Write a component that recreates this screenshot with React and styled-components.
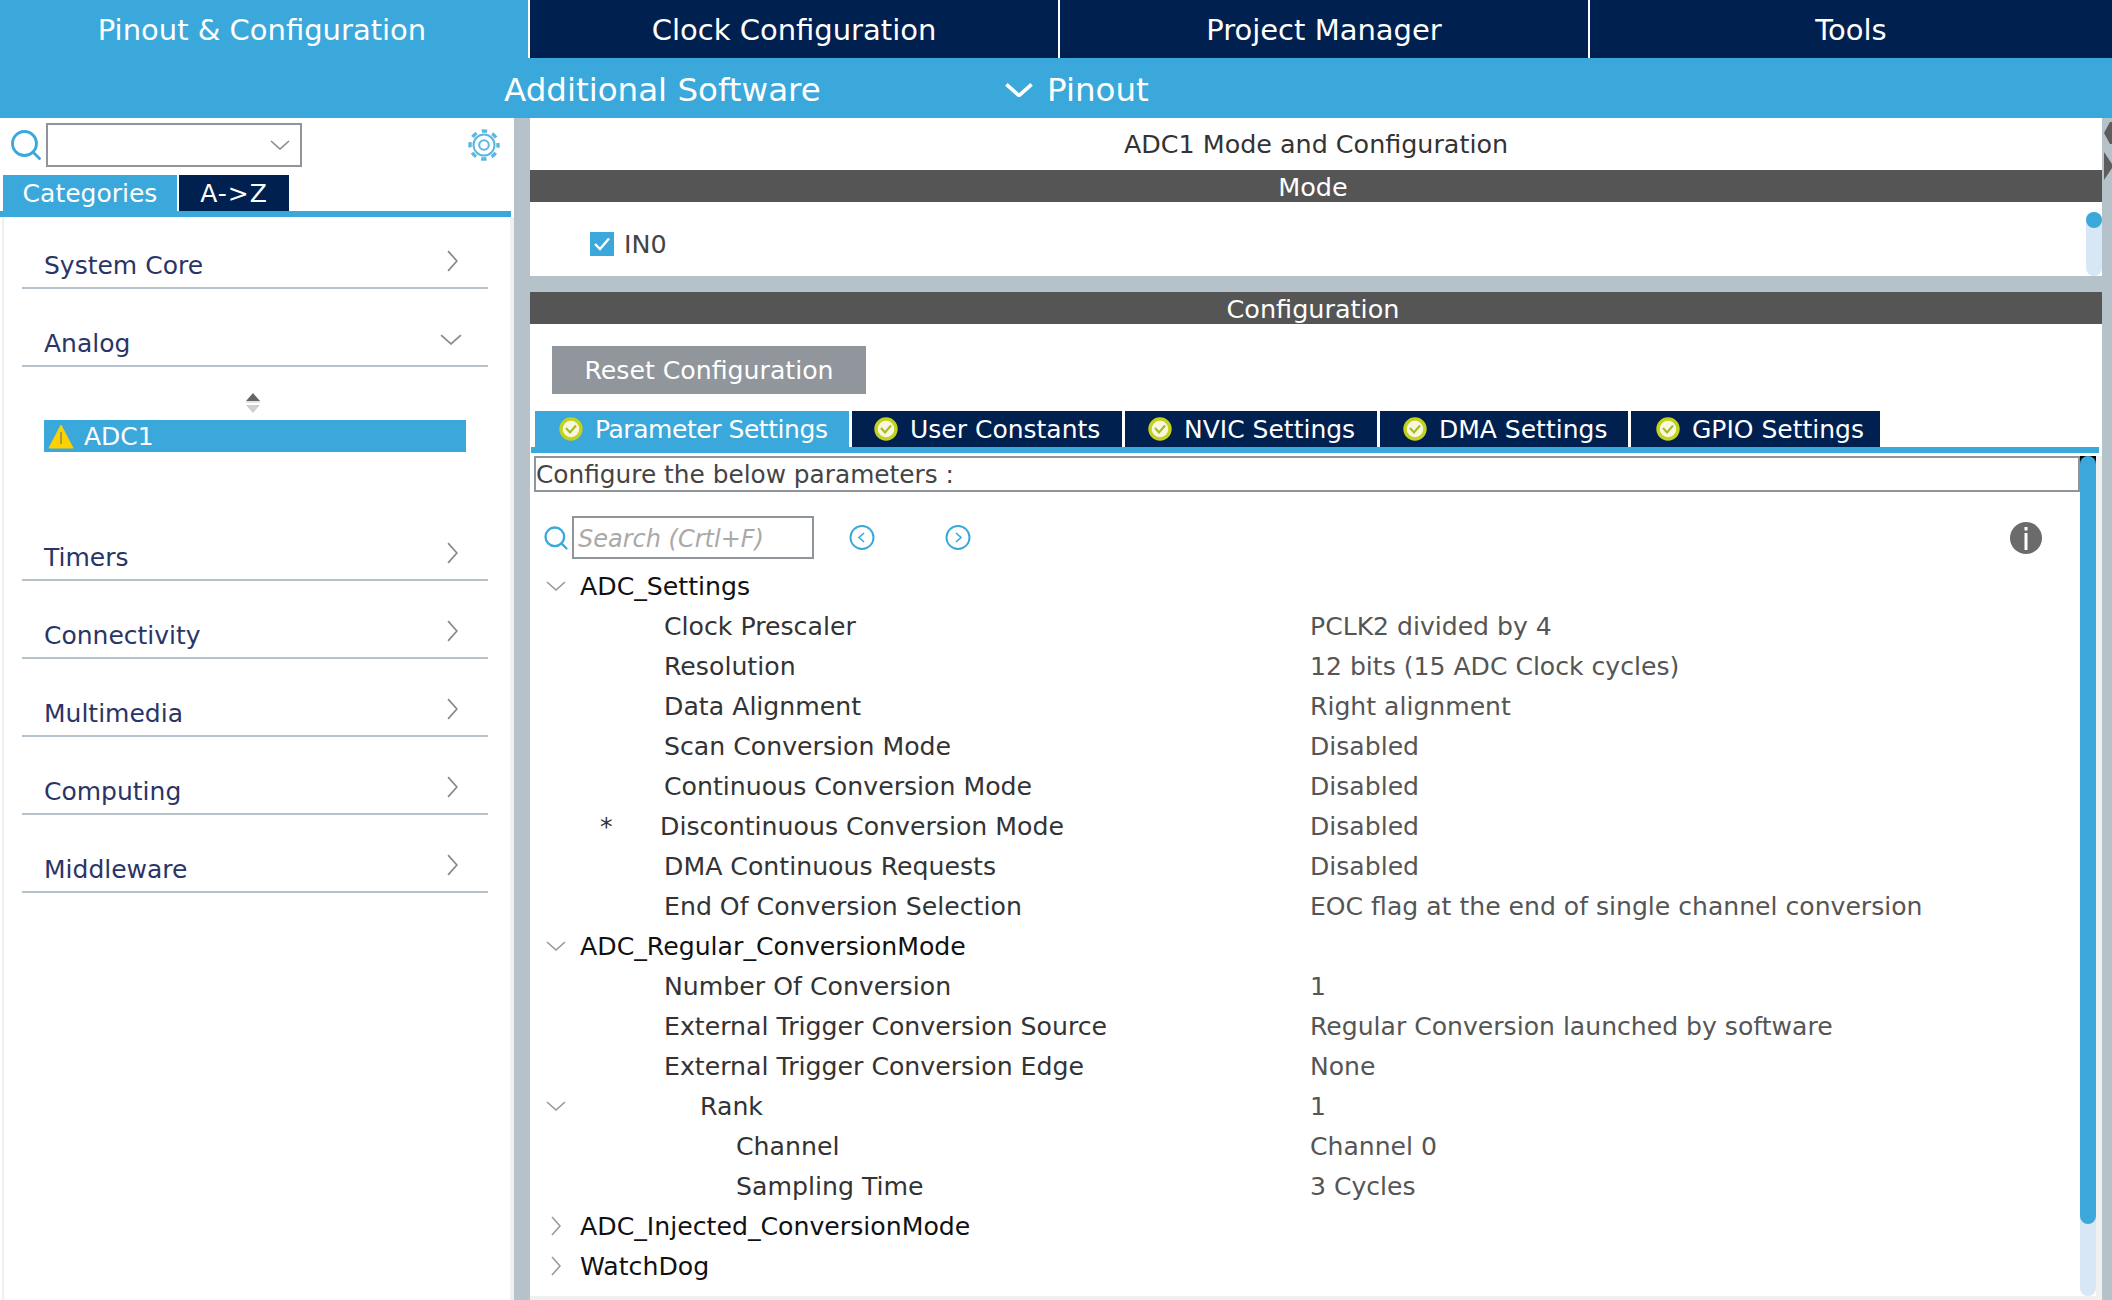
import React from "react";
import styled, { createGlobalStyle } from "styled-components";
import { Search } from "lucide-react";

const BLUE = "#3ba8dc";
const NAVY = "#00204f";
const LINE = "#b6c2ca";

const GlobalStyle = createGlobalStyle`
  html, body {
    margin: 0;
    padding: 0;
    background: #fff;
    overflow: hidden;
  }
  * { box-sizing: border-box; }
  body {
    font-family: "DejaVu Sans", "Open Sans", sans-serif;
  }
`;

const Page = styled.div`
  width: 2112px;
  height: 1300px;
  display: flex;
  flex-direction: column;
`;

const TopTabs = styled.div`
  display: grid;
  grid-template-columns: 528px 530px 530px 524px;
  height: 58px;
  background: ${BLUE};
`;

const TopTab = styled.div`
  display: flex;
  align-items: center;
  justify-content: center;
  padding: 1px ${(p) => (p.$active ? "4px" : "0")} 0 0;
  font-size: 29px;
  color: #fff;
  background: ${(p) => (p.$active ? BLUE : NAVY)};
  border-left: ${(p) => (p.$active ? "0" : "2px solid #fff")};
`;

const SubBar = styled.div`
  display: flex;
  align-items: center;
  height: 60px;
  padding: 3px 0 0 504px;
  background: ${BLUE};
  color: #fff;
  font-size: 32.5px;
`;

const SubItem = styled.div`
  width: 501px;
`;

const PinoutItem = styled.div`
  display: flex;
  align-items: center;
  gap: 14px;
`;

const Body = styled.div`
  flex: 1;
  display: flex;
  min-height: 0;
`;

const LeftPanel = styled.div`
  width: 514px;
  display: flex;
  flex-direction: column;
  background: #fff;
`;

const FinderRow = styled.div`
  display: flex;
  align-items: center;
  height: 57px;
  padding: 0 14px 4px 8px;
  color: ${BLUE};
`;

const Combo = styled.div`
  display: flex;
  align-items: center;
  justify-content: flex-end;
  width: 256px;
  height: 44px;
  margin-left: 2px;
  margin-right: auto;
  padding-right: 10px;
  border: 2px solid #8f959b;
`;

const SideTabs = styled.div`
  display: flex;
  gap: 2px;
  height: 36px;
  padding-left: 3px;
`;

const SideTab = styled.div`
  display: flex;
  align-items: center;
  justify-content: center;
  width: ${(p) => p.$width}px;
  font-size: 25px;
  letter-spacing: ${(p) => (p.$active ? "0" : "1px")};
  color: #fff;
  background: ${(p) => (p.$active ? BLUE : NAVY)};
`;

const SideRule = styled.div`
  width: 511px;
  height: 6px;
  background: ${BLUE};
`;

const CategoryList = styled.div`
  flex: 1;
  display: flex;
  flex-direction: column;
  gap: 34px;
  width: 508px;
  margin-left: 2px;
  padding: 28px 22px 0 18px;
  border-left: 2px solid #f0f0f0;
  background: #fff;
  box-shadow: 6px 0 0 #f0f0f0;
`;

const CategoryRow = styled.div`
  display: flex;
  align-items: center;
  justify-content: space-between;
  height: 44px;
  padding: 0 ${(p) => (p.$open ? "26px" : "30px")} 2px 22px;
  border-bottom: 2px solid ${LINE};
  font-size: 25px;
  color: #2a3567;
`;

const CategoryIcon = styled.span`
  display: flex;
  margin-top: -8px;
`;

const AnalogItems = styled.div`
  display: flex;
  flex-direction: column;
  align-items: center;
  height: 111px;
  margin-top: -9px;
`;

const SortGlyph = styled.svg`
  width: 18px;
  height: 22px;
  margin-left: -4px;
`;

const SelectedItem = styled.div`
  display: flex;
  align-items: center;
  gap: 10px;
  align-self: stretch;
  height: 32px;
  margin: 6px 0 0 22px;
  width: 422px;
  padding-left: 4px;
  background: ${BLUE};
  color: #fff;
  font-size: 25px;
`;

const Splitter = styled.div`
  width: ${(p) => p.$width}px;
  background: ${LINE};
  flex-shrink: 0;
`;

const EdgeStrip = styled(Splitter)`
  position: relative;
  overflow: hidden;
`;

const EdgeArrows = styled.svg`
  position: absolute;
  top: 0;
  left: 0;
  width: 10px;
  height: 70px;
`;

const RightPanel = styled.div`
  flex: 1;
  display: flex;
  flex-direction: column;
  min-width: 0;
  background: #fff;
`;

const PanelTitle = styled.div`
  display: flex;
  align-items: center;
  justify-content: center;
  height: 52px;
  font-size: 25.4px;
  color: #333;
`;

const DarkBar = styled.div`
  display: flex;
  align-items: center;
  justify-content: center;
  height: 32px;
  padding: 2px 6px 0 0;
  background: #545554;
  color: #fff;
  font-size: 25.5px;
`;

const ModePanel = styled.div`
  position: relative;
  display: flex;
  align-items: center;
  gap: 10px;
  height: 74px;
  padding: 10px 0 0 60px;
  font-size: 25.4px;
  color: #444;
`;

const ModeScroll = styled.div`
  position: absolute;
  right: 0;
  top: 10px;
  bottom: 0;
  width: 16px;
  border-radius: 8px;
  background: #d7e7f5;

  &::before {
    content: "";
    display: block;
    width: 16px;
    height: 16px;
    border-radius: 50%;
    background: ${BLUE};
  }
`;

const CheckBox = styled.span`
  display: flex;
  align-items: center;
  justify-content: center;
  width: 24px;
  height: 24px;
  background: ${BLUE};
`;

const PanelGap = styled.div`
  height: 16px;
  background: ${LINE};
`;

const ConfigBody = styled.div`
  flex: 1;
  display: flex;
  flex-direction: column;
  min-height: 0;
`;

const ResetButton = styled.div`
  display: flex;
  align-items: center;
  justify-content: center;
  width: 314px;
  height: 48px;
  margin: 22px 0 0 22px;
  background: #90969c;
  color: #fff;
  font-size: 25.2px;
`;

const ConfigTabs = styled.div`
  display: flex;
  gap: 3px;
  height: 36px;
  margin: 17px 0 0 5px;
`;

const ConfigTab = styled.div`
  display: flex;
  align-items: center;
  gap: 12px;
  width: ${(p) => p.$width}px;
  padding-left: ${(p) => p.$pad}px;
  background: ${(p) => (p.$active ? BLUE : NAVY)};
  color: #fff;
  font-size: 25px;
  letter-spacing: ${(p) => (p.$active ? "-0.45px" : "0")};
`;

const ConfigRule = styled.div`
  width: 1568px;
  height: 6px;
  margin-left: 1px;
  background: ${BLUE};
`;

const ConfigMain = styled.div`
  flex: 1;
  display: flex;
  min-height: 0;
  margin-top: 3px;
`;

const ConfigContent = styled.div`
  flex: 1;
  display: flex;
  flex-direction: column;
  min-width: 0;
`;

const HintBox = styled.div`
  display: flex;
  align-items: center;
  height: 36px;
  margin-left: 4px;
  padding: 1px 0 0 0;
  border: 2px solid #8f959b;
  font-size: 24.8px;
  color: #444;
`;

const SearchRow = styled.div`
  display: flex;
  align-items: center;
  height: 43px;
  margin-top: 24px;
  padding: 0 38px 0 12px;
  color: ${BLUE};
`;

const SearchBox = styled.div`
  display: flex;
  align-items: center;
  width: 242px;
  height: 43px;
  margin-left: 2px;
  padding: 2px 0 0 4px;
  border: 2px solid #8f959b;
  font-size: 24px;
  font-style: italic;
  color: #a9a9a9;
`;

const NavButton = styled.svg`
  width: 26px;
  height: 27px;
  margin-left: ${(p) => p.$gap}px;
`;

const InfoBadge = styled.svg`
  width: 32px;
  height: 32px;
  margin-left: auto;
`;

const Tree = styled.div`
  display: flex;
  flex-direction: column;
  margin-top: 7px;
`;

const TreeRow = styled.div`
  display: grid;
  grid-template-columns: 780px 1fr;
  align-items: center;
  height: 40px;
  font-size: 25.2px;
`;

const TreeLabel = styled.div`
  display: flex;
  align-items: center;
  color: ${(p) => (p.$group ? "#111" : "#333")};
`;

const TreeGutter = styled.span`
  display: flex;
  justify-content: center;
  width: 50px;
  padding-left: 2px;
`;

const TreeIndent = styled.span`
  width: ${(p) => p.$width}px;
  padding-left: 20px;
  color: #333;
`;

const TreeValue = styled.div`
  font-size: 25.1px;
  color: #555;
`;

const ScrollTrack = styled.div`
  position: relative;
  width: 16px;
  border-radius: 0 0 8px 8px;
  background: #d7e7f5;

  &::before {
    content: "";
    position: absolute;
    top: 0;
    left: 0;
    width: 16px;
    height: 8px;
    background: #000;
  }
`;

const ScrollThumb = styled.div`
  position: relative;
  width: 16px;
  height: 768px;
  border-radius: 8px;
  background: ${BLUE};
`;

const ScrollGutter = styled.div`
  width: 6px;
  background: #f0f0f0;
`;

const BottomEdge = styled.div`
  height: 4px;
  background: #f0f0f0;
`;

const Chevron = ({ dir = "right", size = 20, color = "#8a8a8a", width = 1.6 }) => {
  const pts = {
    right: "1,1 9,10 1,19",
    down: "1,1 10,9 19,1",
  }[dir];
  const box = dir === "right" ? [10, 20] : [20, 10];
  return (
    <svg
      width={(box[0] * size) / 20}
      height={(box[1] * size) / 20}
      viewBox={`0 0 ${box[0]} ${box[1]}`}
      fill="none"
    >
      <polyline points={pts} stroke={color} strokeWidth={width} />
    </svg>
  );
};

const GearIcon = () => (
  <svg width="32" height="32" viewBox="0 0 32 32" fill="none" stroke="#5ab6e2">
    <circle cx="16" cy="16" r="10.5" strokeWidth="2" />
    <circle cx="16" cy="16" r="14" strokeWidth="3.4" strokeDasharray="5.5 5.5" strokeDashoffset="2.75" />
    <circle cx="16" cy="16" r="4.8" strokeWidth="2" />
  </svg>
);

const TabCheck = () => (
  <svg width="24" height="24" viewBox="0 0 24 24">
    <circle cx="12" cy="12" r="10" fill="#f8f6e0" stroke="#c3d21c" strokeWidth="3.4" />
    <polyline points="7,11 11,15.5 17,8.5" fill="none" stroke="#a2bc1c" strokeWidth="2" />
  </svg>
);

const WarnIcon = () => (
  <svg width="26" height="25" viewBox="0 0 26 25">
    <polygon points="13,1 25,24 1,24" fill="#fdd000" stroke="#fdd000" strokeLinejoin="round" />
    <rect x="12" y="8" width="2" height="12" fill="#a89a40" />
  </svg>
);

const categoriesAfter = ["Timers", "Connectivity", "Multimedia", "Computing", "Middleware"];

const configTabs = [
  { label: "Parameter Settings", width: 314, pad: 24, active: true },
  { label: "User Constants", width: 270, pad: 22 },
  { label: "NVIC Settings", width: 252, pad: 23 },
  { label: "DMA Settings", width: 248, pad: 23 },
  { label: "GPIO Settings", width: 249, pad: 25 },
];

const rows = [
  { label: "ADC_Settings", group: true, toggle: "down" },
  { label: "Clock Prescaler", indent: 84, value: "PCLK2 divided by 4" },
  { label: "Resolution", indent: 84, value: "12 bits (15 ADC Clock cycles)" },
  { label: "Data Alignment", indent: 84, value: "Right alignment" },
  { label: "Scan Conversion Mode", indent: 84, value: "Disabled" },
  { label: "Continuous Conversion Mode", indent: 84, value: "Disabled" },
  { label: "Discontinuous Conversion Mode", indent: 80, star: true, value: "Disabled" },
  { label: "DMA Continuous Requests", indent: 84, value: "Disabled" },
  { label: "End Of Conversion Selection", indent: 84, value: "EOC flag at the end of single channel conversion" },
  { label: "ADC_Regular_ConversionMode", group: true, toggle: "down" },
  { label: "Number Of Conversion", indent: 84, value: "1" },
  { label: "External Trigger Conversion Source", indent: 84, value: "Regular Conversion launched by software" },
  { label: "External Trigger Conversion Edge", indent: 84, value: "None" },
  { label: "Rank", indent: 120, toggle: "down", value: "1" },
  { label: "Channel", indent: 156, value: "Channel 0" },
  { label: "Sampling Time", indent: 156, value: "3 Cycles" },
  { label: "ADC_Injected_ConversionMode", group: true, toggle: "right" },
  { label: "WatchDog", group: true, toggle: "right" },
];

export default function App() {
  return (
    <Page>
      <GlobalStyle />
      <TopTabs>
        <TopTab $active>Pinout &amp; Configuration</TopTab>
        <TopTab>Clock Configuration</TopTab>
        <TopTab>Project Manager</TopTab>
        <TopTab>Tools</TopTab>
      </TopTabs>
      <SubBar>
        <SubItem>Additional Software</SubItem>
        <PinoutItem>
          <Chevron dir="down" size={28} color="#fff" width={2.6} />
          Pinout
        </PinoutItem>
      </SubBar>
      <Body>
        <LeftPanel>
          <FinderRow>
            <Search size={36} strokeWidth={1.9} />
            <Combo>
              <Chevron dir="down" size={20} />
            </Combo>
            <GearIcon />
          </FinderRow>
          <SideTabs>
            <SideTab $active $width={174}>Categories</SideTab>
            <SideTab $width={110}>A-&gt;Z</SideTab>
          </SideTabs>
          <SideRule />
          <CategoryList>
            <CategoryRow>
              System Core
              <CategoryIcon><Chevron size={22} /></CategoryIcon>
            </CategoryRow>
            <CategoryRow $open>
              Analog
              <CategoryIcon><Chevron dir="down" size={22} /></CategoryIcon>
            </CategoryRow>
            <AnalogItems>
              <SortGlyph viewBox="0 0 18 22">
                <polygon points="9,1 16,9 2,9" fill="#666" />
                <rect x="2" y="9" width="14" height="2" fill="#e4e4e4" />
                <polygon points="9,21 16,13 2,13" fill="#cfcfcf" />
              </SortGlyph>
              <SelectedItem>
                <WarnIcon />
                ADC1
              </SelectedItem>
            </AnalogItems>
            {categoriesAfter.map((name) => (
              <CategoryRow key={name}>
                {name}
                <CategoryIcon><Chevron size={22} /></CategoryIcon>
              </CategoryRow>
            ))}
          </CategoryList>
        </LeftPanel>
        <Splitter $width={16} />
        <RightPanel>
          <PanelTitle>ADC1 Mode and Configuration</PanelTitle>
          <DarkBar>Mode</DarkBar>
          <ModePanel>
            <CheckBox>
              <svg width="18" height="18" viewBox="0 0 18 18">
                <polyline points="2,9 7,14 16,3.5" fill="none" stroke="#fff" strokeWidth="2.4" />
              </svg>
            </CheckBox>
            IN0
            <ModeScroll />
          </ModePanel>
          <PanelGap />
          <DarkBar>Configuration</DarkBar>
          <ConfigBody>
            <ResetButton>Reset Configuration</ResetButton>
            <ConfigTabs>
              {configTabs.map((tab) => (
                <ConfigTab key={tab.label} $active={tab.active} $width={tab.width} $pad={tab.pad}>
                  <TabCheck />
                  {tab.label}
                </ConfigTab>
              ))}
            </ConfigTabs>
            <ConfigRule />
            <ConfigMain>
              <ConfigContent>
                <HintBox>Configure the below parameters :</HintBox>
                <SearchRow>
                  <Search size={28} strokeWidth={2} />
                  <SearchBox>Search (Crtl+F)</SearchBox>
                  <NavButton $gap={35} viewBox="0 0 26 27" fill="none">
                    <circle cx="13" cy="13.5" r="11.5" stroke="#3ba8dc" strokeWidth="2" />
                    <polyline points="15,9 10,13.5 15,18" stroke="#3ba8dc" strokeWidth="1.6" />
                  </NavButton>
                  <NavButton $gap={70} viewBox="0 0 26 27" fill="none">
                    <circle cx="13" cy="13.5" r="11.5" stroke="#3ba8dc" strokeWidth="2" />
                    <polyline points="11,9 16,13.5 11,18" stroke="#3ba8dc" strokeWidth="1.6" />
                  </NavButton>
                  <InfoBadge viewBox="0 0 32 32">
                    <circle cx="16" cy="16" r="16" fill="#6b6b6b" />
                    <rect x="14.5" y="5" width="3" height="3.5" fill="#fff" />
                    <rect x="14.5" y="11" width="3" height="17" fill="#fff" />
                  </InfoBadge>
                </SearchRow>
                <Tree>
                  {rows.map((row) => (
                    <TreeRow key={row.label}>
                      <TreeLabel $group={row.group}>
                        <TreeGutter>
                          {row.toggle && <Chevron dir={row.toggle} size={20} color="#999" />}
                        </TreeGutter>
                        {row.indent && (
                          <TreeIndent $width={row.indent}>{row.star ? "*" : ""}</TreeIndent>
                        )}
                        {row.label}
                      </TreeLabel>
                      <TreeValue>{row.value}</TreeValue>
                    </TreeRow>
                  ))}
                </Tree>
              </ConfigContent>
              <ScrollTrack>
                <ScrollThumb />
              </ScrollTrack>
              <ScrollGutter />
            </ConfigMain>
            <BottomEdge />
          </ConfigBody>
        </RightPanel>
        <EdgeStrip $width={10}>
          <EdgeArrows viewBox="0 0 10 70">
            <polygon points="8,4 2,15 8,26 10,26 10,4" fill="#5d5d5d" />
            <polygon points="2,34 10,46 10,50 2,62" fill="#5d5d5d" />
          </EdgeArrows>
        </EdgeStrip>
      </Body>
    </Page>
  );
}
